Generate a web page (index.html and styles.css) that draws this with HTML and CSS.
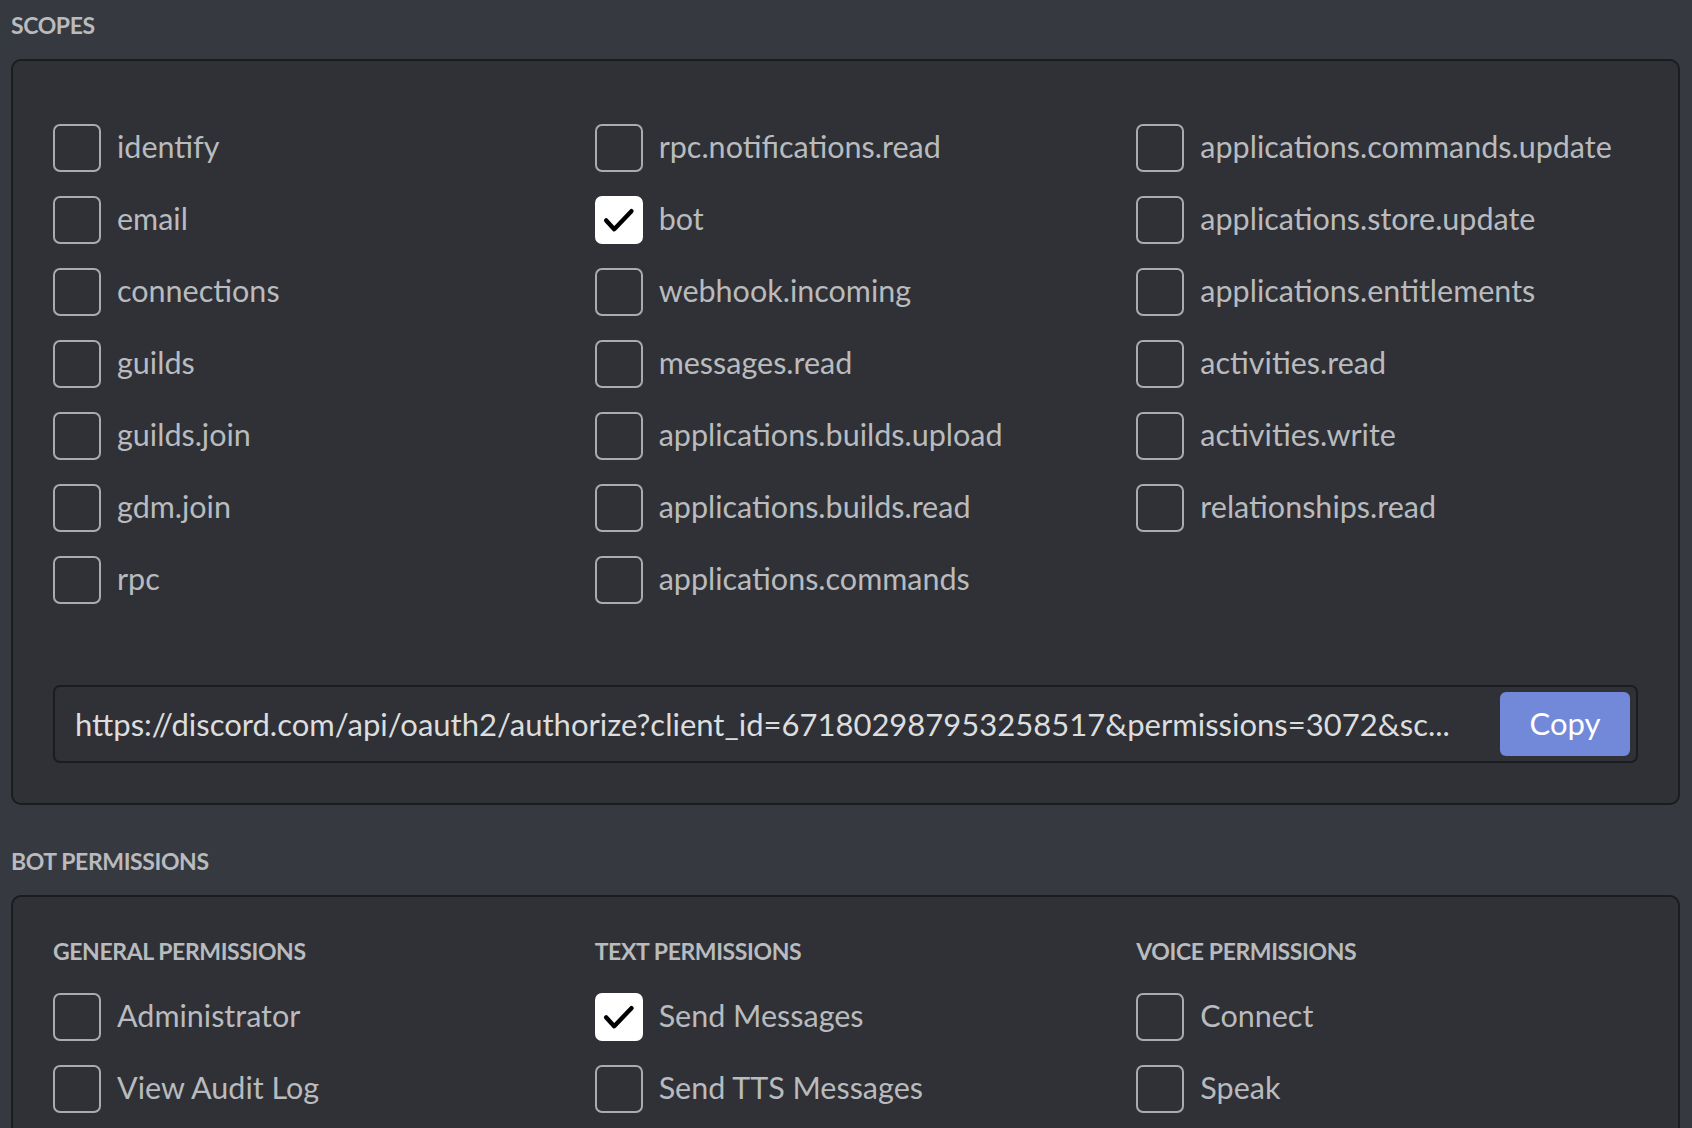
FILE: index.html
```html
<!DOCTYPE html>
<html lang="en">
<head>
<meta charset="utf-8">
<title>OAuth2 URL Generator</title>
<link rel="stylesheet" href="styles.css">
</head>
<body>
<div class="page">
  <h2 class="section-title">SCOPES</h2>
  <div class="panel scopes">
    <div class="grid">
      <div class="col">
        <div class="check"><span class="box"></span><span class="label">identify</span></div>
        <div class="check"><span class="box"></span><span class="label">email</span></div>
        <div class="check"><span class="box"></span><span class="label">connections</span></div>
        <div class="check"><span class="box"></span><span class="label">guilds</span></div>
        <div class="check"><span class="box"></span><span class="label">guilds.join</span></div>
        <div class="check"><span class="box"></span><span class="label">gdm.join</span></div>
        <div class="check"><span class="box"></span><span class="label">rpc</span></div>
      </div>
      <div class="col">
        <div class="check"><span class="box"></span><span class="label">rpc.notifications.read</span></div>
        <div class="check checked"><span class="box"><svg viewBox="0 0 24 24"><path d="M5.6 12.2 L9.6 16.6 L18.2 7.6" fill="none" stroke="#000" stroke-width="2.2" stroke-linecap="round" stroke-linejoin="round"/></svg></span><span class="label">bot</span></div>
        <div class="check"><span class="box"></span><span class="label">webhook.incoming</span></div>
        <div class="check"><span class="box"></span><span class="label">messages.read</span></div>
        <div class="check"><span class="box"></span><span class="label">applications.builds.upload</span></div>
        <div class="check"><span class="box"></span><span class="label">applications.builds.read</span></div>
        <div class="check"><span class="box"></span><span class="label">applications.commands</span></div>
      </div>
      <div class="col">
        <div class="check"><span class="box"></span><span class="label">applications.commands.update</span></div>
        <div class="check"><span class="box"></span><span class="label">applications.store.update</span></div>
        <div class="check"><span class="box"></span><span class="label">applications.entitlements</span></div>
        <div class="check"><span class="box"></span><span class="label">activities.read</span></div>
        <div class="check"><span class="box"></span><span class="label">activities.write</span></div>
        <div class="check"><span class="box"></span><span class="label">relationships.read</span></div>
      </div>
    </div>
    <div class="url-field">
      <span class="url">https://discord.com/api/oauth2/authorize?client_id=671802987953258517&amp;permissions=3072&amp;sc...</span>
      <button class="copy" type="button">Copy</button>
    </div>
  </div>

  <h2 class="section-title">BOT PERMISSIONS</h2>
  <div class="panel perms">
    <div class="grid">
      <div class="col">
        <h3 class="col-title">GENERAL PERMISSIONS</h3>
        <div class="check"><span class="box"></span><span class="label">Administrator</span></div>
        <div class="check"><span class="box"></span><span class="label">View Audit Log</span></div>
      </div>
      <div class="col">
        <h3 class="col-title">TEXT PERMISSIONS</h3>
        <div class="check checked"><span class="box"><svg viewBox="0 0 24 24"><path d="M5.6 12.2 L9.6 16.6 L18.2 7.6" fill="none" stroke="#000" stroke-width="2.2" stroke-linecap="round" stroke-linejoin="round"/></svg></span><span class="label">Send Messages</span></div>
        <div class="check"><span class="box"></span><span class="label">Send TTS Messages</span></div>
      </div>
      <div class="col">
        <h3 class="col-title">VOICE PERMISSIONS</h3>
        <div class="check"><span class="box"></span><span class="label">Connect</span></div>
        <div class="check"><span class="box"></span><span class="label">Speak</span></div>
      </div>
    </div>
  </div>
</div>
</body>
</html>
```

FILE: styles.css
```css
html {
  overflow: hidden;
  background: #36393f;
}

body {
  margin: 0;
  background: #36393f;
  font-family: "Lato", "Liberation Sans", sans-serif;
  color: #b9bbbe;
}

.page {
  padding: 9px 12px 0 11px;
}

.section-title {
  margin: 0 0 18px;
  font-size: 23px;
  line-height: 32px;
  font-weight: 700;
  letter-spacing: -0.4px;
  color: #b9bbbe;
}

.panel + .section-title {
  margin-top: 40px;
}

.panel {
  background: #2f3136;
  border: 2px solid #1b1c1f;
  border-radius: 10px;
}

.scopes {
  padding: 63px 40px 40px;
}

.perms {
  padding: 38px 40px 40px;
}

.grid {
  display: grid;
  grid-template-columns: repeat(3, 1fr);
  column-gap: 40px;
}

.col {
  display: flex;
  flex-direction: column;
  gap: 24px;
}

.col-title {
  margin: 0 0 2px;
  font-size: 23px;
  line-height: 32px;
  font-weight: 700;
  letter-spacing: -0.4px;
  color: #b9bbbe;
}

.check {
  display: flex;
  align-items: center;
  gap: 16px;
  height: 48px;
}

.box {
  box-sizing: border-box;
  flex: none;
  width: 48px;
  height: 48px;
  border: 2px solid #a9abaf;
  border-radius: 7px;
  display: flex;
  align-items: center;
  justify-content: center;
}

.box svg {
  width: 48px;
  height: 48px;
  flex: none;
}

.checked .box {
  background: #ffffff;
  border-color: #ffffff;
}

.label {
  font-size: 30.5px;
  line-height: 38px;
  padding-bottom: 4px;
  white-space: nowrap;
  color: #b9bbbe;
}

.url-field {
  margin-top: 81px;
  display: flex;
  align-items: center;
  justify-content: space-between;
  padding: 5px 6px 5px 20px;
  border: 2px solid #1b1c1f;
  border-radius: 7px;
  background: #2f3136;
}

.url {
  font-size: 31px;
  line-height: 40px;
  color: #dcddde;
  white-space: nowrap;
  overflow: hidden;
}

.copy {
  flex: none;
  width: 130px;
  height: 64px;
  border: 0;
  border-radius: 6px;
  background: #7289da;
  color: #ffffff;
  font-family: "Lato", "Liberation Sans", sans-serif;
  font-size: 31px;
  padding: 0 0 3px;
}
```
